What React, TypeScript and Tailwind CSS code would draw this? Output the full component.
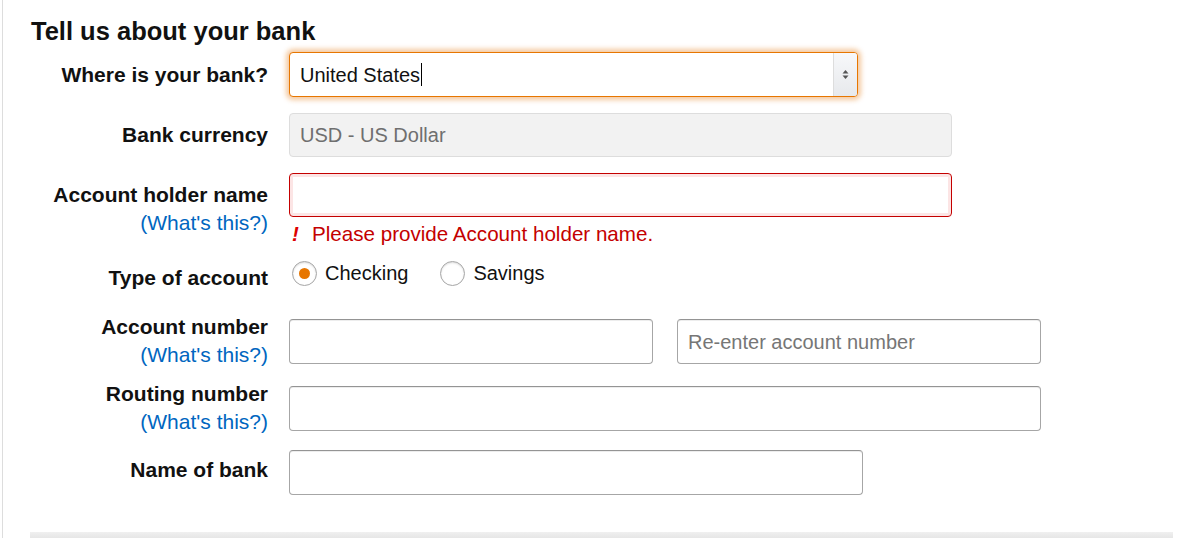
import React from "react";

const font = { fontFamily: '"Liberation Sans", Arial, sans-serif' };

function Label({ children, link }: { children: React.ReactNode; link?: boolean }) {
  return (
    <div className="w-[237px] shrink-0 text-right text-[21px] leading-[28px]">
      <div className="font-bold text-[#111]">{children}</div>
      {link && <div className="text-[#0066c0]">(What's this?)</div>}
    </div>
  );
}

function TextInput({ w, placeholder }: { w: string; placeholder?: string }) {
  return (
    <div
      className={`${w} h-[45px] rounded-[4px] border border-[#a6a6a6] border-t-[#949494] bg-white shadow-[inset_0_1px_0_rgba(0,0,0,0.07)] flex items-center px-[10px] text-[20px] text-[#767676]`}
    >
      {placeholder}
    </div>
  );
}

function Radio({ checked, label }: { checked?: boolean; label: string }) {
  return (
    <div className="flex items-center">
      <div className="w-[25px] h-[25px] rounded-full border border-[#a6a6a6] bg-white flex items-center justify-center shadow-[inset_0_1px_2px_rgba(0,0,0,0.15)]">
        {checked && <div className="w-[11px] h-[11px] rounded-full bg-[#e77600]" />}
      </div>
      <span className="ml-[8px] text-[20px] leading-[28px] text-[#111]">{label}</span>
    </div>
  );
}

export default function App() {
  return (
    <div className="w-[1200px] h-[538px] bg-white overflow-hidden pl-[2px]" style={font}>
      <div className="h-full border-l border-[#dddddd] pl-[28px]">
        <h1 className="pt-[16px] text-[25.5px] leading-[30px] font-bold text-[#111]">Tell us about your bank</h1>

        {/* Row 1 */}
        <div className="flex items-center mt-[6px]">
          <Label>Where is your bank?</Label>
          <div className="ml-[21px] w-[569px] h-[45px] rounded-[4px] border border-[#e77600] shadow-[0_0_5px_3px_rgba(228,121,17,0.4)] bg-white flex overflow-hidden">
            <div className="flex-1 flex items-center pl-[10px] text-[20px] text-[#111]">
              United States
              <span className="inline-block w-[1px] h-[23px] bg-black ml-[1px]" />
            </div>
            <div className="w-[24px] border-l border-[#dddddd] bg-gradient-to-b from-[#f7f8fa] to-[#e7e9ec] flex items-center justify-center">
              <svg width="7" height="11" viewBox="0 0 7 11">
                <path d="M3.5 1 L6.5 4.5 L0.5 4.5 Z" fill="#555" />
                <path d="M3.5 10 L6.5 6.5 L0.5 6.5 Z" fill="#555" />
              </svg>
            </div>
          </div>
        </div>

        {/* Row 2 */}
        <div className="flex items-center mt-[16px]">
          <Label>Bank currency</Label>
          <div className="ml-[21px] w-[663px] h-[44px] rounded-[4px] border border-[#dddddd] bg-[#f2f2f2] flex items-center px-[10px] text-[20px] text-[#6f6f6f]">
            USD - US Dollar
          </div>
        </div>

        {/* Row 3 */}
        <div className="flex items-start mt-[16px]">
          <div className="pt-[8px]">
            <Label link>Account holder name</Label>
          </div>
          <div className="ml-[21px]">
            <div className="w-[663px] h-[44px] rounded-[4px] border border-[#c40000] bg-white shadow-[inset_0_0_0_3px_rgba(221,0,0,0.1)]" />
            <div className="mt-[3px] flex items-center text-[20.6px] leading-[28px] text-[#c40000]">
              <span className="w-[23px] pl-[3px] font-bold italic text-[#d00]">!</span>
              <span>Please provide Account holder name.</span>
            </div>
          </div>
        </div>

        {/* Row 4 */}
        <div className="flex items-start mt-[11px]">
          <div className="pt-[5px]">
            <Label>Type of account</Label>
          </div>
          <div className="ml-[21px] flex items-center gap-[32px] pl-[3px]">
            <Radio checked label="Checking" />
            <Radio label="Savings" />
          </div>
        </div>

        {/* Row 5 */}
        <div className="flex items-start mt-[21px]">
          <Label link>Account number</Label>
          <div className="ml-[21px] mt-[6px] flex gap-[24px]">
            <TextInput w="w-[364px]" />
            <TextInput w="w-[364px]" placeholder="Re-enter account number" />
          </div>
        </div>

        {/* Row 6 */}
        <div className="flex items-start mt-[11px]">
          <Label link>Routing number</Label>
          <div className="ml-[21px] mt-[6px]">
            <TextInput w="w-[752px]" />
          </div>
        </div>

        {/* Row 7 */}
        <div className="flex items-start mt-[14px]">
          <div className="pt-[6px]">
            <Label>Name of bank</Label>
          </div>
          <div className="ml-[21px]">
            <TextInput w="w-[574px]" />
          </div>
        </div>

        <div className="mt-[37px] -ml-[1px] w-[1143px] h-[6px] bg-gradient-to-b from-[#f0f0f0] to-[#e6e6e6]" />
      </div>
    </div>
  );
}
